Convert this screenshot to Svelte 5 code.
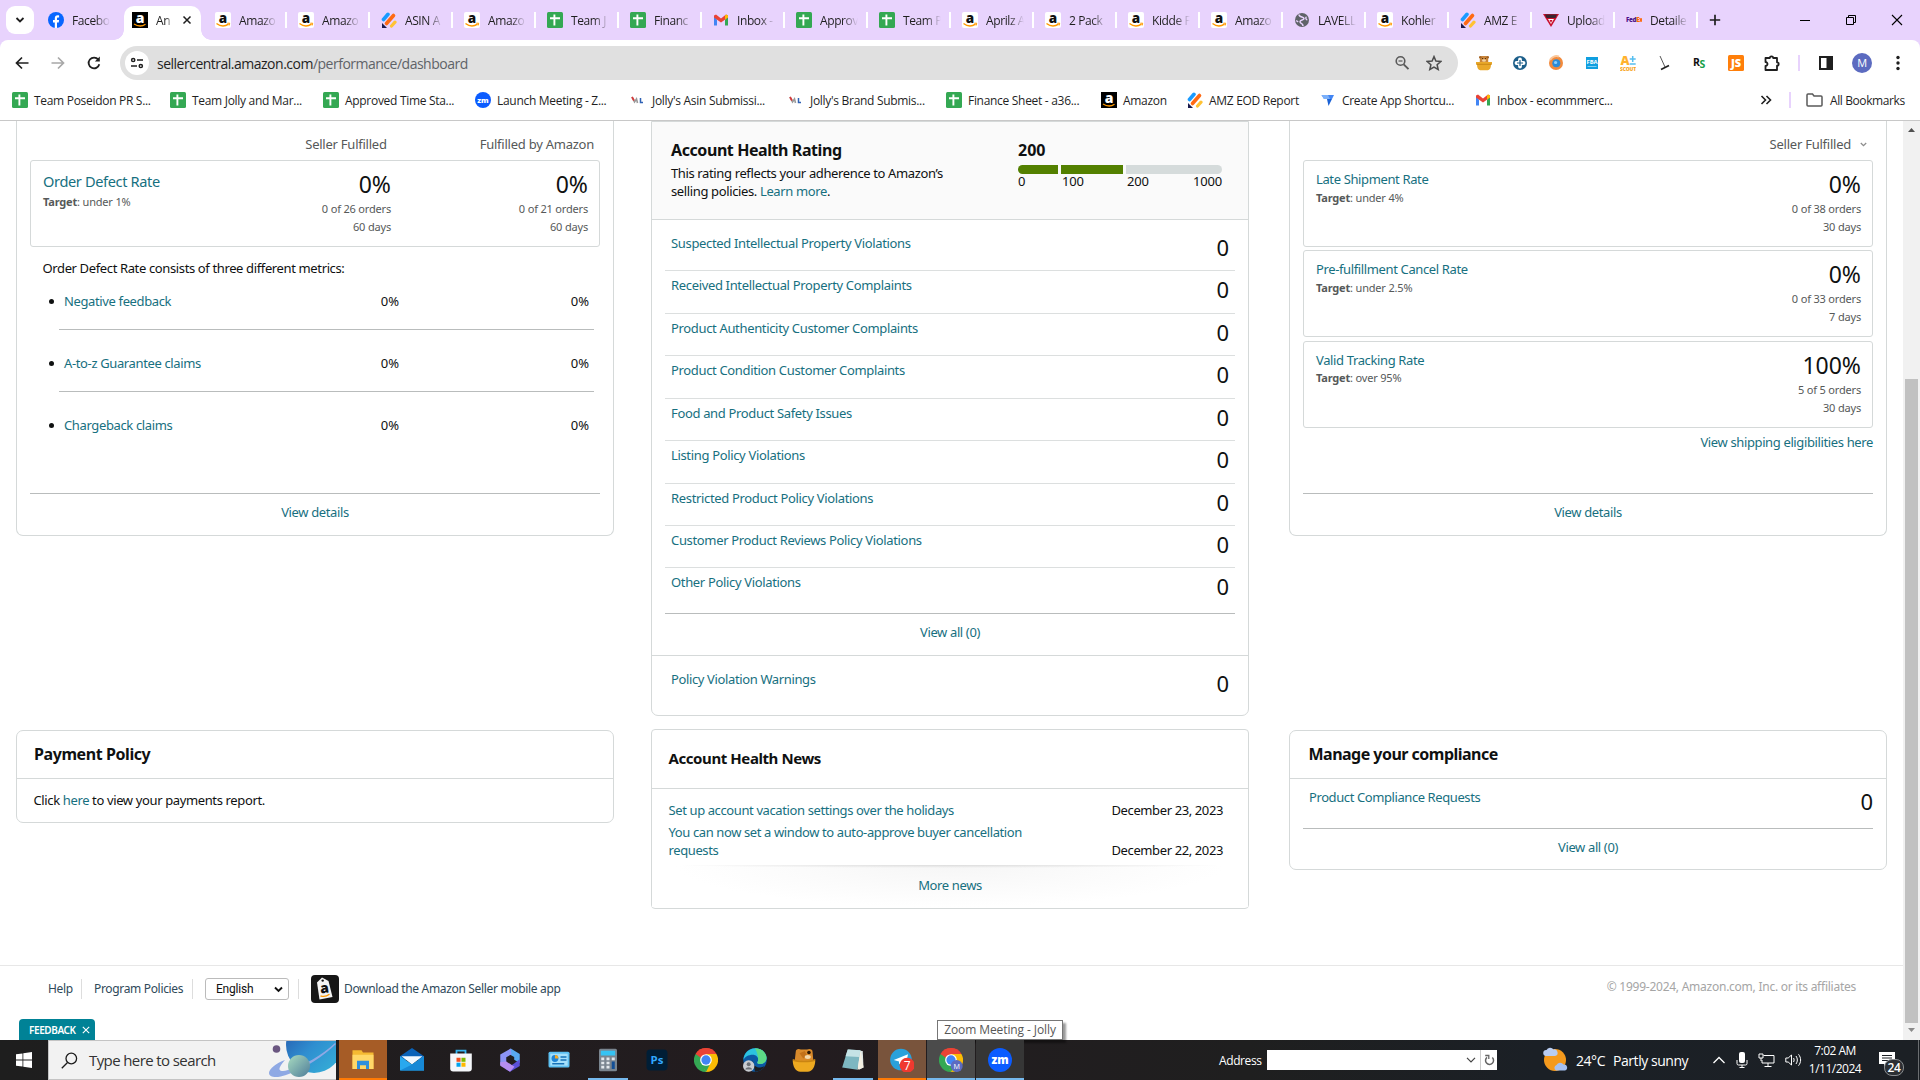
<script lang="ts">
  type Tab = { icon: string; title: string };

  const tabs: Tab[] = [
    { icon: 'amazon', title: 'Amazo' },
    { icon: 'amazon', title: 'Amazo' },
    { icon: 'amz', title: 'ASIN A' },
    { icon: 'amazon', title: 'Amazo' },
    { icon: 'sheets', title: 'Team J' },
    { icon: 'sheets', title: 'Financ' },
    { icon: 'gmail', title: 'Inbox -' },
    { icon: 'sheets', title: 'Approv' },
    { icon: 'sheets', title: 'Team P' },
    { icon: 'amazon', title: 'Aprilz A' },
    { icon: 'amazon', title: '2 Pack' },
    { icon: 'amazon', title: 'Kidde F' },
    { icon: 'amazon', title: 'Amazo' },
    { icon: 'globe', title: 'LAVELL' },
    { icon: 'amazon', title: 'Kohler' },
    { icon: 'amz', title: 'AMZ E' },
    { icon: 'upload', title: 'Upload' },
    { icon: 'fedex', title: 'Detaile' }
  ];

  const bookmarks = [
    { icon: 'sheets', title: 'Team Poseidon PR S...', width: 158 },
    { icon: 'sheets', title: 'Team Jolly and Mar...', width: 153 },
    { icon: 'sheets', title: 'Approved Time Sta...', width: 152 },
    { icon: 'zoom', title: 'Launch Meeting - Z...', width: 155 },
    { icon: 'jolly', title: "Jolly's Asin Submissi...", width: 158 },
    { icon: 'jolly', title: "Jolly's Brand Submis...", width: 158 },
    { icon: 'sheets', title: 'Finance Sheet - a36...', width: 155 },
    { icon: 'amazon-dark', title: 'Amazon', width: 86 },
    { icon: 'amz', title: 'AMZ EOD Report', width: 133 },
    { icon: 'shortcut', title: 'Create App Shortcu...', width: 155 },
    { icon: 'gmail', title: 'Inbox - ecommmerc...', width: 160 }
  ];

  const extensions = ['bear', 'plus-disc', 'orb', 'fba', 'scout', 'broom', 'rs', 'js', 'puzzle'];

  const defects = ['Negative feedback', 'A-to-z Guarantee claims', 'Chargeback claims'];

  const violations = [
    'Suspected Intellectual Property Violations',
    'Received Intellectual Property Complaints',
    'Product Authenticity Customer Complaints',
    'Product Condition Customer Complaints',
    'Food and Product Safety Issues',
    'Listing Policy Violations',
    'Restricted Product Policy Violations',
    'Customer Product Reviews Policy Violations',
    'Other Policy Violations'
  ];

  const shipping = [
    { name: 'Late Shipment Rate', target: 'under 4%', value: '0%', orders: '0 of 38 orders', days: '30 days' },
    { name: 'Pre-fulfillment Cancel Rate', target: 'under 2.5%', value: '0%', orders: '0 of 33 orders', days: '7 days' },
    { name: 'Valid Tracking Rate', target: 'over 95%', value: '100%', orders: '5 of 5 orders', days: '30 days' }
  ];

  const apps = [
    { icon: 'explorer', state: 'alert' },
    { icon: 'mail', state: '' },
    { icon: 'store', state: '' },
    { icon: 'm365', state: '' },
    { icon: 'control', state: '' },
    { icon: 'calc', state: 'running' },
    { icon: 'ps', state: '' },
    { icon: 'chrome', state: '' },
    { icon: 'edge', state: '' },
    { icon: 'bear-cup', state: '' },
    { icon: 'notepad', state: 'running' },
    { icon: 'telegram', state: 'alert muted' },
    { icon: 'chrome-m', state: 'open active' },
    { icon: 'zoom', state: 'open' }
  ];
</script>

{#snippet icon(name: string, size: number)}
  <svg class="icon" width={size} height={size} viewBox="0 0 16 16" fill="none">
    {#if name === 'amazon'}
      <rect width="16" height="16" rx="2" fill="#fff" />
      <text x="8" y="10.6" text-anchor="middle" font-family="Open Sans" font-weight="800" font-size="13.5" fill="#111">a</text>
      <path d="M1.5 11.5c4 3 8.500 3 12 .6" stroke="#f90" stroke-width="1.500" />
      <path d="M12.300 11.200h2.400l-.6 2.300" stroke="#f90" stroke-width="1" />
    {:else if name === 'amazon-dark'}
      <rect width="16" height="16" fill="#000" />
      <text x="8" y="10.8" text-anchor="middle" font-family="Open Sans" font-weight="800" font-size="14" fill="#fff">a</text>
      <path d="M2 12c4 2.600 8 2.600 11.500.3" stroke="#f90" stroke-width="1.300" />
    {:else if name === 'sheets'}
      <rect width="16" height="16" rx="1.500" fill="#34a853" />
      <path d="M3 6.200h10M7.400 2.500v11" stroke="#fff" stroke-width="1.900" />
    {:else if name === 'amz'}
      <path d="M2.500 7.500 7 2.300" stroke="#1a9bff" stroke-width="3.600" stroke-linecap="round" />
      <path d="M5.500 11.500 12.500 3.500" stroke="#ff6a13" stroke-width="3.600" stroke-linecap="round" />
      <path d="M10.500 14 14 10.200" stroke="#ffc233" stroke-width="3.200" stroke-linecap="round" />
      <path d="M1 11v5h5z" fill="#1b1b4d" />
    {:else if name === 'gmail'}
      <path d="M1 4v9.500h3V7.500z" fill="#4285f4" />
      <path d="M15 4v9.500h-3V7.500z" fill="#34a853" />
      <path d="M1 3.500 3 2.500l5 4 5-4 2 1v2L8 10.500 1 5.500z" fill="#ea4335" />
      <path d="M12 3.400 13.200 2.600 15 3.500v2l-3 2z" fill="#fbbc04" />
    {:else if name === 'globe'}
      <circle cx="8" cy="8" r="7" fill="#5f6368" />
      <path d="M5 2.500c0 3 5 2 5 4s-4 1-4 3.200 3 1 3 4.300M12.500 5c-1 .5-1 2.500.8 3M2.200 8.500l2 1.500" stroke="#e8d3fd" stroke-width="1.500" />
    {:else if name === 'facebook'}
      <circle cx="8" cy="8" r="8" fill="#0866ff" />
      <path d="M6.800 16v-5.500H5V8h1.800V6.600c0-2.300 1-3.300 3-3.300.5 0 1 .1 1.300.2v2.100h-.9c-1 0-1.200.4-1.200 1.200V8h2.100l-.4 2.500H9V16z" fill="#fff" />
    {:else if name === 'upload'}
      <path d="M0 2h16L8 15z" fill="#c8102e" />
      <path d="M2 2.500h12l-1.500 3.500h-9z" fill="#3b2430" />
      <path d="M5 7h6l-3 5z" fill="#fff" />
      <path d="M6.500 8h3L8 11z" fill="#c8102e" />
    {:else if name === 'fedex'}
      <text x="0" y="9.800" font-family="Open Sans" font-weight="800" font-size="6.200" letter-spacing="-.3" fill="#4d148c">Fed<tspan fill="#f60">Ex</tspan></text>
    {:else if name === 'zoom'}
      <circle cx="8" cy="8" r="8" fill="#0b5cff" />
      <text x="8" y="10.600" text-anchor="middle" font-family="Open Sans" font-weight="800" font-size="7.600" fill="#fff">zm</text>
    {:else if name === 'jolly'}
      <path d="M2 5 4.500 10 6.500 7l1 4" stroke="#9a9a9a" stroke-width="1.600" />
      <path d="M2 5 4 8.500" stroke="#d43a3a" stroke-width="1.800" />
      <path d="M10.500 6v4.500H13" stroke="#2f62b5" stroke-width="1.500" />
    {:else if name === 'shortcut'}
      <path d="M1.500 3h12.500L12 7H6.500L4 7z" fill="#4285f4" />
      <path d="M7 7h5l-3.500 7z" fill="#1a62d6" />
      <path d="M1.500 3H8l2 4H4z" fill="#7bb0fa" />
    {:else if name === 'bear'}
      <path d="M3.800 2.200 5.500 1h5l1.700 1.200v6H3.800z" fill="#c9853a" />
      <circle cx="4.300" cy="2.300" r="1.300" fill="#a66425" />
      <circle cx="11.700" cy="2.300" r="1.300" fill="#a66425" />
      <circle cx="6.600" cy="3.500" r=".6" fill="#3a2008" />
      <circle cx="9.400" cy="3.500" r=".6" fill="#3a2008" />
      <ellipse cx="8" cy="5.500" rx="2" ry="1.300" fill="#f2d3a2" />
      <path d="M0 7h16v2.600h-1c0 3.600-1.500 5.600-3.200 5.600H4.200C2.500 15.200 1 13.200 1 9.600H0z" fill="#e9a82a" />
      <path d="M.5 9.300h15" stroke="#c07d10" stroke-width=".8" />
    {:else if name === 'bear-cup'}
      <path d="M2.500 2.500C2.500.5 4.500.3 6 1h4c1.500-.8 3.800-.4 3.700 1.500l.6 7H1.700z" fill="#d98a2b" />
      <path d="M5 3.500 8.500 2l1.500 3-2.500 2z" fill="#c2711a" />
      <circle cx="11.300" cy="3" r="1.200" fill="#2a1605" />
      <ellipse cx="10.500" cy="6" rx="2" ry="1.300" fill="#f3d9ad" />
      <path d="M.5 7.500c2 1.300 13 1.300 15 0 .2 5-2 8.300-5 8.300h-5C2.500 15.800.3 12.500.5 7.500z" fill="#eda920" />
      <path d="M.7 8c3 1.300 11.600 1.300 14.600 0" stroke="#c98412" />
    {:else if name === 'plus-disc'}
      <circle cx="8" cy="8" r="7" fill="#1d5f8a" />
      <path d="M8 4.500v7M4.500 8h7" stroke="#fff" stroke-width="3.800" stroke-linecap="round" />
      <path d="M8 5v6M5 8h6" stroke="#1d5f8a" stroke-width="1.200" />
    {:else if name === 'orb'}
      <circle cx="8" cy="8" r="7" fill="#f28a3c" />
      <path d="M2 5a7 7 0 0 1 9-3.300" stroke="#fbc79a" stroke-width="2" />
      <circle cx="8.300" cy="8.200" r="4" fill="#2b8bd6" />
      <circle cx="7.600" cy="7.500" r="1.600" fill="#8ad0ff" />
    {:else if name === 'fba'}
      <rect x="2" y="2" width="12" height="12" fill="#0f9fe0" />
      <text x="8" y="8.800" text-anchor="middle" font-family="Open Sans" font-weight="700" font-size="5.800" fill="#fff">FBA</text>
      <path d="M3.500 11.500h9" stroke="#7fd0f5" stroke-width="1" />
    {:else if name === 'scout'}
      <text x="5" y="9.500" text-anchor="middle" font-family="Open Sans" font-weight="800" font-size="12.500" fill="#ffb22e">A</text>
      <path d="M12.700 1v6M9.700 4h6M9.700 9h6" stroke="#55bff0" stroke-width="1.500" />
      <text x="8" y="15.500" text-anchor="middle" font-family="Open Sans" font-weight="800" font-size="5" letter-spacing="-.2" fill="#f7a51c">SCOUT</text>
    {:else if name === 'broom'}
      <path d="M4 1l5 11" stroke="#444" stroke-width=".9" />
      <path d="M5 14.500 13 10.500" stroke="#222" stroke-width="1.800" />
    {:else if name === 'rs'}
      <text x="1" y="11" font-family="Open Sans" font-weight="700" font-size="10.500" fill="#111">R</text>
      <text x="7.500" y="13.300" font-family="Open Sans" font-weight="700" font-size="10.500" fill="#17a04a">S</text>
    {:else if name === 'js'}
      <rect width="16" height="16" rx="1.500" fill="#ff7f0a" />
      <text x="8" y="12" text-anchor="middle" font-family="Open Sans" font-weight="800" font-size="11" fill="#fff">JS</text>
    {:else if name === 'puzzle'}
      <path d="M1.500 3h4.300a1.700 1.700 0 0 1 3.400 0h3.800v4.300a1.700 1.700 0 0 1 0 3.400V15H1.500v-4a2 2 0 0 0 0-4z" stroke="#1f1f1f" stroke-width="1.800" stroke-linejoin="round" />
    {:else if name === 'explorer'}
      <path d="M1 1.500h6l1 1.500h7v11H1z" fill="#f5b932" />
      <path d="M1 4.500h14V14H1z" fill="#ffd768" />
      <path d="M4 8.500h8V14h-2v-2.500H6V14H4z" fill="#2f8fdc" />
    {:else if name === 'mail'}
      <path d="M0 5.500 8 0l8 5.500V8H0z" fill="#0a62b8" />
      <path d="M1 5.500h14L8 11z" fill="#f2f9ff" />
      <path d="M0 5.500 8 11l8-5.500V15H0z" fill="#29a8ee" />
      <path d="M0 15 8 11l8-5.500V15z" fill="#1789d6" />
    {:else if name === 'store'}
      <path d="M5 4V1.800h6V4" stroke="#35b5f0" stroke-width="1.200" />
      <path d="M.8 3.700h14.400v10a2 2 0 0 1-2 2H2.800a2 2 0 0 1-2-2z" fill="#f5f7fa" />
      <path d="M5 6.500h2.700v2.700H5z" fill="#f25022" />
      <path d="M8.300 6.500H11v2.700H8.300z" fill="#7fba00" />
      <path d="M5 9.800h2.700v2.700H5z" fill="#00a4ef" />
      <path d="M8.300 9.800H11v2.700H8.300z" fill="#ffb900" />
    {:else if name === 'm365'}
      <path d="M8.500.3 14.500 4v6L10.800 7.800V6L6.500 3.500z" fill="#58a8f0" />
      <path d="M8.500.3 1.500 4.300v7.200l4-1.500V6.200L9 4.200z" fill="#8c93f5" />
      <path d="M14.500 7.500V12L8 15.800 5 14l5.500-3.500z" fill="#5b50d8" />
      <path d="M1.500 9.500v2.300L8 15.800l3-3.300L5.500 9z" fill="#b58cf0" />
    {:else if name === 'control'}
      <rect x="1" y="2.500" width="14" height="10.500" rx="1" fill="#5cc0f2" />
      <rect x="2.200" y="3.800" width="11.600" height="8" fill="#a5e0fb" />
      <circle cx="5.300" cy="7" r="2.300" fill="#1d83d4" />
      <path d="M5.300 7V4.700A2.300 2.300 0 0 1 7.600 7z" fill="#f6a821" />
      <path d="M9 6h4M9 8h4M3.500 10.500h8" stroke="#1672b8" />
    {:else if name === 'calc'}
      <rect x="2" y=".5" width="12" height="15" rx="1" fill="#7a858f" />
      <rect x="3.200" y="1.800" width="9.600" height="3.200" fill="#35c3f3" />
      <path d="M3.500 7.200h2M7 7.200h2M3.500 10h2M7 10h2M3.500 12.800h2M7 12.800h2M10.500 7.200h2" stroke="#e3e8ec" stroke-width="1.800" />
      <path d="M11.500 9v5" stroke="#134f96" stroke-width="2" />
    {:else if name === 'ps'}
      <rect x="1" y="1" width="14" height="14" rx="2.500" fill="#001e36" />
      <text x="8" y="10.800" text-anchor="middle" font-family="Open Sans" font-weight="700" font-size="7.600" fill="#31a8ff">Ps</text>
    {:else if name === 'chrome' || name === 'chrome-m'}
      <path d="M8 8 1.070 4A8 8 0 0 1 14.930 4z" fill="#ea4335" />
      <path d="M8 8 14.930 4A8 8 0 0 1 8 16z" fill="#fbbc04" />
      <path d="M8 8v8A8 8 0 0 1 1.070 4z" fill="#34a853" />
      <path d="M8 4h6.930L11.500 10 8 16l-1-2 3-5z" fill="#fbbc04" />
      <path d="M1.070 4 4.600 10 8 16 11 10 8 8z" fill="#34a853" />
      <path d="M1.070 4A8 8 0 0 1 14.930 4H8L4.500 6.500z" fill="#ea4335" />
      <circle cx="8" cy="8" r="3.900" fill="#fff" />
      <circle cx="8" cy="8" r="3.100" fill="#4285f4" />
      {#if name === 'chrome-m'}
        <circle cx="11.800" cy="12" r="4" fill="#5c6bc0" />
        <text x="11.800" y="13.700" text-anchor="middle" font-family="Open Sans" font-size="4.800" fill="#fff">M</text>
      {/if}
    {:else if name === 'edge'}
      <circle cx="8" cy="8" r="7.800" fill="#0c59a4" />
      <path d="M.3 8C.5 3.500 4 .2 8 .2c4.500 0 7.700 3 7.700 6.500 0 2.400-1.800 4-4.200 4-1.500 0-2.300-.6-1.800-1.300C11 7 9.300 4.500 6.500 4.500 3.500 4.500 1 6 .3 8z" fill="#2cc3e0" />
      <path d="M8 .2c4.500 0 7.700 3 7.700 6.500 0 2.400-1.800 4-4.200 4-1.500 0-2.300-.6-1.800-1.300C11 7 9 2 8 .2z" fill="#5ddb86" />
      <path d="M6.500 8c-.5 3 2 5 5 5l3-.8c-1.500 2-3.500 3.600-6.500 3.600z" fill="#1d1d1f" />
      <circle cx="3.800" cy="12" r="3.800" fill="#c9ccd1" />
      <circle cx="3.800" cy="10.800" r="1.300" fill="#6c7076" />
      <path d="M1.500 14.300c.5-2 4.100-2 4.600 0" fill="#6c7076" />
    {:else if name === 'notepad'}
      <path d="M5 1.200 14.500 2 15 13l-3 1.500z" fill="#dfe7e6" />
      <path d="M4.500 1 13 1.500 11 14.500.8 13z" fill="#7db7c1" />
      <path d="M4.500 1 13 1.500 12.300 6 3 5.500z" fill="#c5e3e6" />
      <path d="M11 14.500 13 1.500 15 13z" fill="#f3efe2" />
    {:else if name === 'telegram'}
      <circle cx="7.300" cy="7.700" r="7.200" fill="#2aa1da" />
      <path d="M2.500 8 12 4.200 10.500 11.500 7.500 9.500 6 10.800V9z" fill="#fff" />
      <circle cx="11.400" cy="11.500" r="5" fill="#f0392f" />
      <text x="11.400" y="14.400" text-anchor="middle" font-family="Open Sans" font-size="8" fill="#fff">7</text>
    {/if}
  </svg>
{/snippet}

<div class="screen">
  <header class="browser">
    <div class="tab-strip">
      <button class="tab-search" aria-label="Search tabs">
        <svg width="10" height="10" viewBox="0 0 10 10" fill="none"><path d="M1.500 3 5 6.500 8.500 3" stroke="#1f1f1f" stroke-width="1.800" /></svg>
      </button>
      <div class="tab first">
        {@render icon('facebook', 16)}
        <span class="tab-title">Facebo</span>
      </div>
      <div class="tab current">
        {@render icon('amazon-dark', 16)}
        <span class="tab-title">An</span>
        <svg width="10" height="10" viewBox="0 0 10 10"><path d="M1.500 1.500l7 7M8.500 1.500l-7 7" stroke="#1f1f1f" stroke-width="1.500" /></svg>
      </div>
      {#each tabs as tab}
        <div class="tab">
          {@render icon(tab.icon, 16)}
          <span class="tab-title">{tab.title}</span>
        </div>
      {/each}
      <svg class="new-tab" width="12" height="12" viewBox="0 0 12 12"><path d="M6 .8v10.400M.8 6h10.400" stroke="#1f1f1f" stroke-width="1.700" /></svg>
      <div class="window-controls">
        <svg width="12" height="12" viewBox="0 0 12 12"><path d="M1 6.500h10" stroke="#000" /></svg>
        <svg width="12" height="12" viewBox="0 0 12 12" fill="none"><path d="M1.500 3.500h7v7h-7zM3.500 3.500v-2h7v7h-2" stroke="#000" /></svg>
        <svg width="12" height="12" viewBox="0 0 12 12"><path d="M1 1l10 10M11 1 1 11" stroke="#000" stroke-width="1.100" /></svg>
      </div>
    </div>

    <div class="toolbar">
      <div class="nav">
        <svg width="16" height="16" viewBox="0 0 16 16" fill="none"><path d="M14.500 8H3M8 2.500 2.500 8 8 13.500" stroke="#1f1f1f" stroke-width="1.700" /></svg>
        <svg width="16" height="16" viewBox="0 0 16 16" fill="none"><path d="M1.500 8H13M8 2.500 13.500 8 8 13.500" stroke="#a8a8a8" stroke-width="1.700" /></svg>
        <svg width="16" height="16" viewBox="0 0 16 16" fill="none"><path d="M13.300 9.200A5.400 5.400 0 1 1 12.300 4.600" stroke="#1f1f1f" stroke-width="1.800" /><path d="M13.800 1.500v5H8.900z" fill="#1f1f1f" /></svg>
      </div>
      <div class="omnibox">
        <span class="site-info">
          <svg width="14" height="14" viewBox="0 0 14 14" fill="none" stroke="#1f1f1f" stroke-width="1.500"><circle cx="3.200" cy="4" r="1.600" /><path d="M7 4h6M1 10h6" /><circle cx="10.800" cy="10" r="1.600" /></svg>
        </span>
        <span class="url">sellercentral.amazon.com<span class="path">/performance/dashboard</span></span>
        <svg width="16" height="16" viewBox="0 0 16 16" fill="none" stroke="#5a5a5a"><circle cx="6.500" cy="6" r="4.300" stroke-width="1.600" /><path d="M9.700 9.300l4.800 4.900" stroke-width="1.900" /><path d="M4.500 6h4" stroke-width="1.200" /></svg>
        <svg width="16" height="16" viewBox="0 0 16 16" fill="none"><path d="M8 1.600l1.900 4.500 4.900.4-3.700 3.200 1.100 4.800L8 12l-4.200 2.500 1.100-4.800L1.200 6.500l4.900-.4z" stroke="#4d4d4d" stroke-width="1.500" /></svg>
      </div>
      <div class="extensions">
        {#each extensions as name}
          {@render icon(name, 16)}
        {/each}
      </div>
      <span class="divider"></span>
      <svg class="side-panel" width="16" height="16" viewBox="0 0 16 16"><path d="M1 1h14v14H1zM3 3v10h5.500V3z" fill="#1f1f1f" fill-rule="evenodd" /></svg>
      <span class="avatar">M</span>
      <svg class="menu-dots" width="4" height="16" viewBox="0 0 4 16" fill="#1f1f1f"><circle cx="2" cy="2.500" r="1.700" /><circle cx="2" cy="8" r="1.700" /><circle cx="2" cy="13.500" r="1.700" /></svg>
    </div>

    <div class="bookmarks">
      {#each bookmarks as bookmark}
        <div class="bookmark" style="width: {bookmark.width}px">
          {@render icon(bookmark.icon, 16)}
          <span>{bookmark.title}</span>
        </div>
      {/each}
      <svg class="overflow" width="12" height="10" viewBox="0 0 12 10" fill="none"><path d="M1.500 1 5.500 5l-4 4M6.500 1l4 4-4 4" stroke="#1f1f1f" stroke-width="1.600" /></svg>
      <span class="divider"></span>
      <svg width="17" height="14" viewBox="0 0 17 14" fill="none"><path d="M1 2a1 1 0 0 1 1-1h4.500L8 3h7a1 1 0 0 1 1 1v8a1 1 0 0 1-1 1H2a1 1 0 0 1-1-1z" stroke="#5a5a5a" stroke-width="1.500" /></svg>
      <span class="all-bookmarks">All Bookmarks</span>
    </div>
  </header>

  <div class="viewport">
    <main class="page">
      <div class="columns">
        <div class="column">
          <section class="card service cut">
            <div class="fulfillment">
              <span class="seller">Seller Fulfilled</span>
              <span>Fulfilled by Amazon</span>
            </div>
            <div class="metric">
              <div class="metric-name large">
                <a href="#odr">Order Defect Rate</a>
                <small><b>Target</b>: under 1%</small>
              </div>
              <div class="metric-value">
                <strong>0%</strong>
                <small>0 of 26 orders</small>
                <small>60 days</small>
              </div>
              <div class="metric-value second">
                <strong>0%</strong>
                <small>0 of 21 orders</small>
                <small>60 days</small>
              </div>
            </div>
            <p class="intro">Order Defect Rate consists of three different metrics:</p>
            <ul class="defects">
              {#each defects as defect}
                <li>
                  <a href="#defect">{defect}</a>
                  <span>0%</span>
                  <span class="last">0%</span>
                </li>
              {/each}
            </ul>
            <div class="card-footer"><a href="#details">View details</a></div>
          </section>

          <section class="card panel payment">
            <h2>Payment Policy</h2>
            <p>Click <a href="#payments">here</a> to view your payments report.</p>
          </section>
        </div>

        <div class="column">
          <section class="card health">
            <div class="rating">
              <div class="rating-text">
                <h2>Account Health Rating</h2>
                <p>This rating reflects your adherence to Amazon’s<br />selling policies. <a href="#more">Learn more</a>.</p>
              </div>
              <div class="score">
                <h2>200</h2>
                <div class="score-bar"><i></i><i></i><i></i></div>
                <div class="score-scale"><span>0</span><span>100</span><span>200</span><span>1000</span></div>
              </div>
            </div>
            <div class="violations">
              {#each violations as violation}
                <div class="violation">
                  <a href="#violation">{violation}</a>
                  <strong>0</strong>
                </div>
              {/each}
            </div>
            <div class="card-footer"><a href="#all">View all (0)</a></div>
            <div class="warnings">
              <a href="#warnings">Policy Violation Warnings</a>
              <strong>0</strong>
            </div>
          </section>

          <section class="card news">
            <h2>Account Health News</h2>
            <div class="news-list">
              <div class="news-item">
                <a href="#news">Set up account vacation settings over the holidays</a>
                <span>December 23, 2023</span>
              </div>
              <div class="news-item">
                <a href="#news">You can now set a window to auto-approve buyer cancellation<br />requests</a>
                <span>December 22, 2023</span>
              </div>
            </div>
            <div class="more-news"><a href="#news">More news</a></div>
          </section>
        </div>

        <div class="column">
          <section class="card service cut">
            <div class="fulfillment select">
              <span>Seller Fulfilled</span>
              <svg width="7" height="5" viewBox="0 0 7 5" fill="none"><path d="M.8 1 3.500 3.600 6.200 1" stroke="#8c8c8c" stroke-width="1.300" /></svg>
            </div>
            {#each shipping as metric}
              <div class="metric">
                <div class="metric-name">
                  <a href="#metric">{metric.name}</a>
                  <small><b>Target</b>: {metric.target}</small>
                </div>
                <div class="metric-value">
                  <strong>{metric.value}</strong>
                  <small>{metric.orders}</small>
                  <small>{metric.days}</small>
                </div>
              </div>
            {/each}
            <div class="eligibility"><a href="#shipping">View shipping eligibilities here</a></div>
            <div class="card-footer"><a href="#details">View details</a></div>
          </section>

          <section class="card panel compliance">
            <h2>Manage your compliance</h2>
            <div class="violation">
              <a href="#compliance">Product Compliance Requests</a>
              <strong>0</strong>
            </div>
            <div class="card-footer"><a href="#all">View all (0)</a></div>
          </section>
        </div>
      </div>

      <footer class="site-footer">
        <span class="help">Help</span>
        <span class="policies">Program Policies</span>
        <span class="language">
          <span class="language-select">English
            <svg width="9" height="7" viewBox="0 0 9 7" fill="none"><path d="M1 1.500 4.500 5 8 1.500" stroke="#111" stroke-width="1.900" /></svg>
          </span>
        </span>
        <svg class="app-logo" width="28" height="28" viewBox="0 0 28 28">
          <rect width="28" height="28" rx="4" fill="#161616" />
          <path d="M6 7.500 11 2.500l6.500 3.500 4 16-13 2.500z" fill="#f4f4f4" />
          <circle cx="11.700" cy="5.600" r="1.200" fill="#161616" />
          <text x="13.800" y="17.800" text-anchor="middle" font-family="Open Sans" font-weight="800" font-size="14" fill="#111" transform="rotate(-8 14 16)">a</text>
          <path d="M9.500 20.800c3 1.200 6 .6 9-1.600" stroke="#f90" stroke-width="1.400" fill="none" />
        </svg>
        <span class="download">Download the Amazon Seller mobile app</span>
        <span class="copyright">© 1999-2024, Amazon.com, Inc. or its affiliates</span>
      </footer>
      <div class="feedback">
        FEEDBACK
        <svg width="8" height="8" viewBox="0 0 8 8"><path d="M.8.8l6.400 6.400M7.200.8.8 7.200" stroke="#fff" stroke-width="1.100" /></svg>
      </div>
    </main>
    <div class="scrollbar">
      <svg width="7" height="4" viewBox="0 0 7 4"><path d="M0 4 3.500 0 7 4z" fill="#505050" /></svg>
      <div class="thumb"></div>
      <svg width="7" height="4" viewBox="0 0 7 4"><path d="M0 0 3.500 4 7 0z" fill="#8a8a8a" /></svg>
    </div>
    <div class="tooltip">Zoom Meeting - Jolly</div>
  </div>

  <div class="taskbar">
    <div class="start">
      <svg width="16" height="16" viewBox="0 0 16 16" fill="#fff"><path d="M0 2.300 6.500 1.400v6.200H0zM7.300 1.300 16 0v7.600H7.300zM0 8.400h6.500v6.200L0 13.700zM7.300 8.400H16V16l-8.700-1.300z" /></svg>
    </div>
    <div class="search">
      <svg width="17" height="17" viewBox="0 0 17 17" fill="none" stroke="#1b1b1b" stroke-width="1.300"><circle cx="10.300" cy="6.500" r="5.300" /><path d="M6.500 10.500.8 16.300" /></svg>
      <span>Type here to search</span>
      <svg class="planets" width="68" height="38" viewBox="0 0 68 38">
        <defs>
          <linearGradient id="planet" x1="0" y1="0" x2="1" y2="1">
            <stop offset="0" stop-color="#244fa5" /><stop offset=".5" stop-color="#2f8ed0" /><stop offset="1" stop-color="#36b5d8" />
          </linearGradient>
          <linearGradient id="moon" x1="0" y1="0" x2="1" y2="1">
            <stop offset="0" stop-color="#a9dcc0" /><stop offset="1" stop-color="#4f7d9a" />
          </linearGradient>
        </defs>
        <circle cx="46" cy="4" r="28" fill="url(#planet)" />
        <path d="M17 19C8 22 1 28 1 32c0 5 9 5 17 2 18-6 38-19 50-31l-1-1C54 14 36 25 20 29c-6 2-10 1-8-3 1-2 3-5 5-7z" fill="#8fa9e4" />
        <circle cx="31" cy="25" r="11" fill="url(#moon)" />
        <circle cx="8.500" cy="8" r="3.800" fill="#6a5680" />
      </svg>
    </div>
    <div class="apps">
      {#each apps as app}
        <div class="app {app.state}">{@render icon(app.icon, 24)}</div>
      {/each}
    </div>
    <span class="address-label">Address</span>
    <div class="address">
      <svg width="10" height="6" viewBox="0 0 10 6" fill="none"><path d="M1 .8l4 4 4-4" stroke="#444" stroke-width="1.200" /></svg>
      <span class="reload">
        <svg width="11" height="12" viewBox="0 0 11 12" fill="none"><path d="M8.300 3.500A4 4 0 1 1 3 3.300" stroke="#666" stroke-width="1.500" /><path d="M1.200 1.500h3.600v3.600" stroke="#666" stroke-width="1.300" /></svg>
      </span>
    </div>
    <div class="weather">
      <svg width="25" height="26" viewBox="0 0 25 26">
        <circle cx="12" cy="13" r="11" fill="#f59a1d" />
        <path d="M3 9a3 3 0 0 1 .5-6 4 4 0 0 1 7-.5A3.300 3.300 0 0 1 12 9z" fill="#b9cdf3" />
        <path d="M13 23.500a3 3 0 0 1 .5-5.500 4 4 0 0 1 7-.5 3.100 3.100 0 0 1 1.500 6z" fill="#a6c1f2" />
      </svg>
      <span>24°C</span>
      <span>Partly sunny</span>
    </div>
    <div class="tray">
      <svg width="14" height="8" viewBox="0 0 14 8" fill="none"><path d="M1.500 7 7 1.500 12.500 7" stroke="#fff" stroke-width="1.300" /></svg>
      <svg width="12" height="16" viewBox="0 0 12 16" fill="none"><rect x="3" y="0" width="6" height="11" rx="2" fill="#fff" /><path d="M1 8v3.500a1.500 1.500 0 0 0 1.500 1.500h7a1.500 1.500 0 0 0 1.500-1.500V8M6 13v2.500M3.500 15.500h5" stroke="#fff" /></svg>
      <svg width="17" height="14" viewBox="0 0 17 14" fill="none" stroke="#fff"><path d="M5.500 2.500h10.500v7.500H4V7M10 10v3M6.500 13.500h7M1 1h4v4H1zM3 5v3" /></svg>
      <svg width="17" height="14" viewBox="0 0 17 14" fill="none" stroke="#fff"><path d="M.8 5v4h2.400L6.500 12V2L3.200 5zM8.500 5c.8 1.200.8 2.800 0 4M11 3c1.800 2.400 1.800 5.600 0 8M13.500 1.300c2.800 3.400 2.800 8 0 11.400" /></svg>
    </div>
    <div class="clock"><span>7:02 AM</span><span>1/11/2024</span></div>
    <div class="notifications">
      <svg width="16" height="16" viewBox="0 0 16 16"><path d="M0 0h16v12H8.500L5 15.500V12H0z" fill="#fff" /><path d="M3 3.500h10M3 6h10M3 8.500h6" stroke="#1c2025" /></svg>
      <span class="count">24</span>
    </div>
  </div>
</div>

<style>
  :global(body) {
    overflow: hidden;
  }

  .screen {
    --link: #17707f;
    --line: #d5d9d9;
    display: flex;
    flex-direction: column;
    width: 1920px;
    height: 1080px;
    background: #fff;
    font-family: 'Open Sans', 'Noto Sans', sans-serif;
    font-size: 12px;
    letter-spacing: -0.3px;
    color: #1f1f1f;
    overflow: hidden;
  }

  .screen :global(*) {
    box-sizing: border-box;
  }

  svg {
    display: block;
    flex: none;
    letter-spacing: 0;
  }

  a {
    color: var(--link);
    text-decoration: none;
  }

  h2,
  p,
  ul {
    margin: 0;
    padding: 0;
  }

  /* browser chrome */
  .browser {
    height: 121px;
    flex: none;
    border-bottom: 1px solid #c8c8c8;
    background: linear-gradient(#e8d3fd 48px, #fff 48px);
    white-space: nowrap;
  }

  .tab-strip {
    display: flex;
    align-items: center;
    height: 40px;
  }

  .tab-search {
    display: flex;
    align-items: center;
    justify-content: center;
    width: 28px;
    height: 28px;
    margin-left: 6px;
    padding: 0;
    border: 0;
    border-radius: 9px;
    background: #fff;
  }

  .tab {
    display: flex;
    align-items: center;
    gap: 8px;
    width: 83px;
    height: 16px;
    padding-left: 11px;
    border-right: 2px solid #fff;
  }

  .tab.first {
    width: 90px;
    padding-left: 14px;
    border: 0;
  }

  .tab-title {
    width: 38px;
    letter-spacing: -0.4px;
    mask-image: linear-gradient(90deg, #000 60%, transparent);
  }

  .tab.current {
    position: relative;
    width: 77px;
    height: 34px;
    margin: 6px 3px 0 0;
    padding: 0 0 6px 8px;
    border: 0;
    border-radius: 10px 10px 0 0;
    background: #fff;
  }

  /* flared feet of the selected tab */
  .tab.current::before,
  .tab.current::after {
    content: '';
    position: absolute;
    bottom: 0;
    width: 10px;
    height: 10px;
  }

  .tab.current::before {
    left: -10px;
    background: radial-gradient(circle at 0 0, transparent 9.500px, #fff 10px);
  }

  .tab.current::after {
    right: -10px;
    background: radial-gradient(circle at 100% 0, transparent 9.500px, #fff 10px);
  }

  .tab.current .tab-title {
    width: 17px;
    margin-right: 1px;
  }

  .new-tab {
    margin-left: 11px;
  }

  .window-controls {
    display: flex;
    gap: 34px;
    margin-left: auto;
    margin-right: 17px;
  }

  .toolbar {
    display: flex;
    align-items: center;
    height: 46px;
    border-radius: 8px 8px 0 0;
    background: #fff;
  }

  .nav {
    display: flex;
    gap: 20px;
    width: 120px;
    padding-left: 14px;
  }

  .omnibox {
    display: flex;
    align-items: center;
    width: 1338px;
    height: 34px;
    padding: 0 16px 0 5px;
    gap: 16px;
    border-radius: 17px;
    background: #e0e0e0;
  }

  .site-info {
    display: flex;
    align-items: center;
    justify-content: center;
    width: 24px;
    height: 24px;
    margin-right: -8px;
    border-radius: 50%;
    background: #fff;
  }

  .url {
    flex: 1;
    font-size: 14px;
    letter-spacing: -0.5px;
  }

  .path {
    color: #5f6368;
  }

  .extensions {
    display: flex;
    gap: 20px;
    margin-left: 18px;
  }

  .divider {
    width: 2px;
    height: 16px;
    background: #e8d3fd;
  }

  .toolbar .divider {
    margin: 0 18px;
  }

  .avatar {
    width: 20px;
    height: 20px;
    margin: 0 24px 0 18px;
    border-radius: 50%;
    background: #5c6bc0;
    color: #fff;
    font-size: 11px;
    line-height: 20px;
    text-align: center;
  }

  .bookmarks {
    display: flex;
    align-items: center;
    height: 28px;
    padding-left: 12px;
  }

  .bookmark {
    display: flex;
    align-items: center;
    gap: 6px;
    flex: none;
  }

  .overflow {
    margin-left: 125px;
    margin-right: 17px;
  }

  .bookmarks .divider {
    margin-right: 15px;
  }

  .all-bookmarks {
    margin-left: 7px;
    letter-spacing: -0.4px;
  }

  /* page */
  .viewport {
    position: relative;
    display: flex;
    height: 919px;
    flex: none;
  }

  .page {
    position: relative;
    width: 1903px;
    font-family: 'Noto Sans', sans-serif;
    font-size: 13px;
    letter-spacing: -0.37px;
    line-height: 18px;
    color: #0f1111;
    white-space: nowrap;
  }

  .columns {
    display: grid;
    grid-template-columns: 635px 638px 598px;
    height: 844px;
    padding-left: 16px;
  }

  .card {
    width: 598px;
    border: 1px solid var(--line);
    border-radius: 7px;
  }

  .card h2 {
    font-size: 16px;
    font-weight: 700;
    letter-spacing: -0.42px;
  }

  .cut {
    height: 415px;
    border-top: 0;
    border-radius: 0 0 7px 7px;
  }

  .service {
    display: flex;
    flex-direction: column;
    padding: 14px 13px 0;
  }

  .fulfillment {
    display: flex;
    justify-content: flex-end;
    height: 25px;
    padding-right: 6px;
    color: #565959;
    letter-spacing: -0.24px;
  }

  .fulfillment .seller {
    margin-right: 93px;
  }

  .fulfillment.select {
    align-items: flex-start;
    gap: 9px;
    padding-right: 6px;
  }

  .select svg {
    margin-top: 7px;
  }

  .metric {
    display: flex;
    height: 87px;
    margin-bottom: 3.300px;
    padding: 0 11px 0 12px;
    border: 1px solid var(--line);
    border-radius: 3px;
  }

  .metric small {
    display: block;
    font-size: 11px;
    letter-spacing: -0.18px;
    color: #565959;
  }

  .metric-name {
    flex: 1;
    padding-top: 9px;
  }

  .metric-name.large {
    padding-top: 10.500px;
  }

  .metric-name:not(.large) small {
    margin-top: 0.500px;
  }

  .large a {
    font-size: 14.600px;
  }

  .large small {
    margin-top: 2.500px;
  }

  .metric-value {
    padding-top: 9px;
    text-align: right;
  }

  .metric-value.second {
    width: 197px;
  }

  .metric-value strong {
    display: block;
    font-size: 23px;
    font-weight: 400;
    letter-spacing: 0;
    line-height: 29px;
  }

  .metric-value strong + small {
    margin-top: 1px;
  }

  .intro {
    margin-top: 9px;
    padding-left: 12.500px;
  }

  .defects {
    padding: 15px 6px 0 29px;
    list-style: none;
  }

  .defects li {
    position: relative;
    display: flex;
    height: 62px;
    padding-left: 5px;
  }

  .defects li::before {
    content: '';
    position: absolute;
    left: -10px;
    top: 7px;
    width: 5px;
    height: 5px;
    border-radius: 50%;
    background: #0f1111;
  }

  .defects li:not(:last-child)::after {
    content: '';
    position: absolute;
    left: 0;
    right: 0;
    top: 37px;
    height: 1px;
    background: #b9bcbc;
  }

  .defects a {
    flex: 1;
  }

  .defects span {
    letter-spacing: 0;
  }

  .defects .last {
    width: 195px;
    padding-right: 5px;
    text-align: right;
  }

  .card-footer {
    height: 43px;
    padding-top: 9px;
    border-top: 1px solid #b9bcbc;
    text-align: center;
  }

  .service .card-footer {
    height: 42px;
    margin-top: auto;
  }

  .eligibility {
    margin-top: 2px;
    text-align: right;
  }

  .panel {
    margin-top: 194px;
  }

  .panel h2 {
    height: 48px;
    padding: 14px 0 0 17px;
    border-bottom: 1px solid var(--line);
  }

  .payment {
    height: 93px;
  }

  .payment p {
    padding: 12px 16.500px;
  }

  .health {
    display: flex;
    flex-direction: column;
    height: 595px;
    border-radius: 0 0 7px 7px;
  }

  .rating {
    display: flex;
    height: 98px;
    padding: 19px 0 0 19px;
    background: #fafafa;
    border-bottom: 1px solid var(--line);
  }

  .rating-text {
    width: 347px;
  }

  .rating p {
    margin-top: 5px;
  }

  .score {
    width: 204px;
  }

  .score h2 {
    letter-spacing: 0;
  }

  .score-bar {
    display: grid;
    grid-template-columns: 40px 62px 96px;
    gap: 3px;
    height: 9px;
    margin-top: 6px;
    border-radius: 5px;
    overflow: hidden;
  }

  .score-bar i {
    background: #538000;
  }

  .score-bar i:last-child {
    background: #d5dbdb;
  }

  .score-scale {
    display: grid;
    grid-template-columns: 44px 65px 40px 1fr;
    margin-top: -2px;
    letter-spacing: -0.2px;
  }

  .score-scale span:last-child {
    text-align: right;
  }

  .violations {
    height: 393px;
    padding: 9px 13px 0;
  }

  .violation {
    display: flex;
    justify-content: space-between;
    height: 42.430px;
    padding: 5px 6px 0;
    border-bottom: 1px solid #dcdfdf;
    letter-spacing: -0.34px;
  }

  .violation:last-child {
    border: 0;
  }

  .violation strong,
  .warnings strong {
    padding-top: 1px;
    font-size: 22px;
    font-weight: 400;
    letter-spacing: 0;
    line-height: 24px;
  }

  .health .card-footer {
    height: 42px;
    margin: 0 13px;
  }

  .warnings {
    display: flex;
    justify-content: space-between;
    padding: 14px 19px 0;
    border-top: 1px solid var(--line);
  }

  .news {
    height: 180px;
    margin-top: 13px;
    border-radius: 4px;
  }

  .news h2 {
    height: 59px;
    padding: 19px 0 0 16.500px;
    border-bottom: 1px solid var(--line);
    font-size: 15px;
  }

  .news-list {
    height: 76px;
    padding: 12px 25px 0 16.500px;
    letter-spacing: -0.39px;
  }

  .news-item {
    display: flex;
    align-items: flex-end;
    justify-content: space-between;
    margin-bottom: 4px;
  }

  .more-news {
    height: 42px;
    padding-top: 11px;
    text-align: center;
    background: radial-gradient(ellipse 46% 3px at 50% 0, #dcdcdc, transparent), radial-gradient(ellipse 46% 100% at 50% 0, #f6f6f6, #fff);
  }

  .compliance {
    height: 140px;
  }

  .compliance h2 {
    padding-left: 18.500px;
    letter-spacing: -0.52px;
  }

  .compliance .violation {
    height: 49px;
    margin: 0 13px;
    padding: 8.500px 0 0 6px;
    border: 0;
    letter-spacing: -0.41px;
  }

  .compliance .card-footer {
    margin: 0 13px;
  }

  .site-footer {
    display: flex;
    align-items: center;
    height: 47px;
    padding-left: 48px;
    border-top: 1px solid #e7e7e7;
    color: #2f4a5a;
    font-size: 12px;
    letter-spacing: -0.33px;
  }

  .help,
  .policies,
  .language {
    display: flex;
    align-items: center;
    height: 20px;
    border-right: 1px solid #ddd;
  }

  .help,
  .policies,
  .download {
    padding-bottom: 1px;
  }

  .help {
    width: 34px;
    margin-right: 12px;
  }

  .policies {
    width: 99px;
    margin-right: 12px;
  }

  .language {
    width: 94px;
    margin-right: 12px;
  }

  .language-select {
    display: flex;
    align-items: center;
    justify-content: space-between;
    width: 84px;
    height: 22px;
    padding: 0 5px 0 10px;
    border: 1px solid #bbb;
    border-radius: 3px;
    font-family: Roboto, sans-serif;
    font-size: 12px;
    letter-spacing: -0.2px;
    color: #111;
  }

  .app-logo {
    margin-right: 5px;
  }

  .copyright {
    margin-left: auto;
    margin-right: 47px;
    padding-bottom: 5px;
    color: #a5a5a5;
    letter-spacing: -0.25px;
  }

  .feedback {
    position: absolute;
    left: 19px;
    bottom: 0;
    display: flex;
    align-items: center;
    gap: 6px;
    width: 76px;
    height: 21px;
    padding-left: 10px;
    border-radius: 4px 4px 0 0;
    background: #008296;
    color: #fff;
    font-size: 10px;
    font-weight: 600;
    letter-spacing: -0.4px;
  }

  .scrollbar {
    display: flex;
    flex-direction: column;
    align-items: center;
    width: 17px;
    padding: 7px 0 8px;
    background: #f1f1f1;
  }

  .thumb {
    width: 13px;
    height: 644px;
    margin: auto 0 5px;
    background: #c1c1c1;
  }

  .tooltip {
    position: absolute;
    left: 937px;
    bottom: 0;
    width: 126px;
    height: 20px;
    border: 1px solid #767676;
    background: #fff;
    box-shadow: 3px 3px 2px rgba(0, 0, 0, 0.4);
    color: #575757;
    letter-spacing: -0.1px;
    line-height: 18px;
    text-align: center;
    white-space: nowrap;
  }

  /* taskbar */
  .taskbar {
    display: flex;
    align-items: center;
    height: 40px;
    flex: none;
    background: linear-gradient(90deg, #1e1e1e, #231c1f 42%, #1f1f1f 65%, #1b2026 80%, #1c2025);
    color: #fff;
    white-space: nowrap;
  }

  .start {
    width: 48px;
    padding-left: 16px;
  }

  .search {
    display: flex;
    align-items: center;
    width: 288px;
    height: 40px;
    padding-left: 12px;
    border: 1px solid #c4c4c4;
    border-right: 0;
    background: #f2f2f2;
    color: #333;
    font-size: 15px;
    letter-spacing: -0.6px;
  }

  .search span {
    width: 180px;
    padding-left: 11px;
  }

  .planets {
    margin-left: auto;
  }

  .apps {
    display: flex;
    gap: 1px;
    margin-left: 3px;
  }

  .app {
    position: relative;
    display: flex;
    align-items: center;
    justify-content: center;
    width: 48px;
    height: 40px;
  }

  .alert {
    background: #a65c26;
    border-bottom: 2px solid #ff7a05;
    padding-top: 2px;
  }

  .muted {
    background: #79543c;
  }

  .open {
    background: #363636;
    border-bottom: 2px solid #76b9ed;
    padding-top: 2px;
  }

  .active {
    background: #4b4b4b;
  }

  .running::after {
    content: '';
    position: absolute;
    bottom: 0;
    width: 40px;
    height: 2px;
    background: #76b9ed;
  }

  .address-label {
    width: 48px;
    margin-left: 195px;
    letter-spacing: -0.4px;
  }

  .address {
    display: flex;
    align-items: center;
    justify-content: flex-end;
    width: 230px;
    height: 20px;
    background: #fff;
  }

  .reload {
    display: flex;
    align-items: center;
    justify-content: center;
    width: 17px;
    height: 20px;
    margin-left: 4px;
    border-left: 1px solid #ccc;
  }

  .weather {
    display: flex;
    align-items: center;
    gap: 8px;
    width: 168px;
    margin-left: 46px;
    font-size: 14px;
    letter-spacing: -0.45px;
  }

  .tray {
    display: flex;
    align-items: center;
    gap: 10px;
    width: 90px;
    margin-left: 1px;
  }

  .clock {
    display: flex;
    flex-direction: column;
    align-items: center;
    width: 70px;
    padding-right: 4px;
    font-size: 12px;
    letter-spacing: -0.5px;
    line-height: 18px;
  }

  .notifications {
    position: relative;
    width: 47px;
    height: 40px;
    padding: 12px 0 0 7px;
    border-right: 1px solid #6a6d70;
  }

  .count {
    position: absolute;
    left: 12px;
    top: 19px;
    width: 20px;
    height: 17px;
    border: 1px solid #8a8d90;
    border-radius: 8px;
    background: #2b2f33;
    font-size: 12px;
    font-weight: 600;
    line-height: 15px;
    text-align: center;
  }
</style>
